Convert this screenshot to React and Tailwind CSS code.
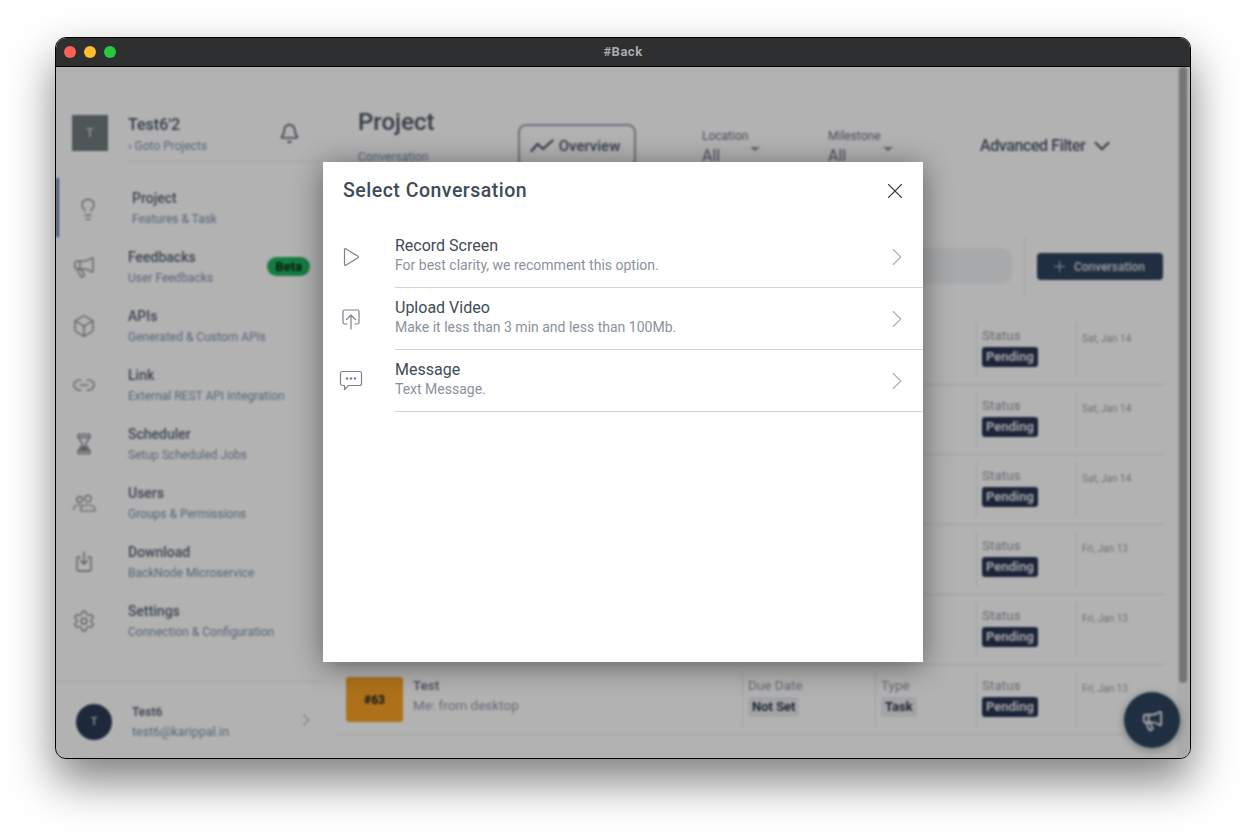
import React from "react";
import {
  Bell,
  Box,
  ChevronDown,
  ChevronRight,
  Lightbulb,
  Link2,
  Megaphone,
  Plus,
  Settings,
  X,
} from "lucide-react";

const navItems = [
  { title: "Project", sub: "Features & Task", icon: Lightbulb, active: true },
  { title: "Feedbacks", sub: "User Feedbacks", icon: Megaphone, beta: true },
  { title: "APIs", sub: "Generated & Custom APIs", icon: Box },
  { title: "Link", sub: "External REST API Integration", icon: Link2 },
  { title: "Scheduler", sub: "Setup Scheduled Jobs", icon: HourglassIcon },
  { title: "Users", sub: "Groups & Permissions", icon: UsersIcon },
  { title: "Download", sub: "BackNode Microservice", icon: DownloadIcon },
  { title: "Settings", sub: "Connection & Configuration", icon: Settings },
];

// rows 1-5 sit behind the modal up to the status column
const rows = [
  { id: "#68", date: "Sat, Jan 14", covered: true },
  { id: "#67", date: "Sat, Jan 14", covered: true },
  { id: "#66", date: "Sat, Jan 14", covered: true },
  { id: "#65", date: "Fri, Jan 13", covered: true },
  { id: "#64", date: "Fri, Jan 13", covered: true },
  { id: "#63", date: "Fri, Jan 13" },
];

const options = [
  { title: "Record Screen", sub: "For best clarity, we recomment this option.", icon: PlayIcon },
  { title: "Upload Video", sub: "Make it less than 3 min and less than 100Mb.", icon: UploadIcon },
  { title: "Message", sub: "Text Message.", icon: MessageIcon },
];

function DownloadIcon({ className }) {
  return (
    <svg viewBox="0 0 24 24" fill="none" stroke="currentColor" strokeWidth="1.3" strokeLinecap="round" strokeLinejoin="round" className={className}>
      <path d="M8 7H6.500A1.500 1.500 0 0 0 5 8.500v11A1.500 1.500 0 0 0 6.500 21h11a1.500 1.500 0 0 0 1.500-1.500v-11A1.500 1.500 0 0 0 17.500 7H16" />
      <path d="M12 2v12M8.500 10.500 12 14l3.500-3.500" />
    </svg>
  );
}

function HourglassIcon({ className }) {
  return (
    <svg viewBox="0 0 24 24" fill="none" stroke="currentColor" strokeWidth="1.3" strokeLinejoin="round" className={className}>
      <path d="M6 2.500h12v3H6zM6 18.500h12v3H6z" />
      <path d="M7 5.500c0 3.500 3.500 4.500 3.500 6.500S7 15 7 18.500M17 5.500c0 3.500-3.500 4.500-3.500 6.500s3.500 3 3.500 6.500" />
      <path d="M8 18.500 12 14l4 4.500Z" fill="currentColor" />
    </svg>
  );
}

function UsersIcon({ className }) {
  return (
    <svg viewBox="0 0 24 24" fill="none" stroke="currentColor" strokeWidth="1.2" strokeLinecap="round" strokeLinejoin="round" className={className}>
      <circle cx="7.500" cy="8.500" r="2.800" />
      <circle cx="16" cy="7.500" r="3.200" />
      <path d="M1.500 18.500c0-2.800 2.500-4.500 5.500-4.500 1.200 0 2.200.2 3 .7" />
      <path d="M8.500 19c0-3 3.300-5 7.500-5s7 2 7 5c0 .6-.4 1-1 1H9.500c-.6 0-1-.4-1-1Z" />
    </svg>
  );
}

function PlayIcon() {
  return (
    <svg width="18" height="20" viewBox="0 0 18 20" fill="none" stroke="#7b838e" strokeWidth="1.200" strokeLinejoin="round">
      <path d="M2.500 2.500v15a.8.8 0 0 0 1.200.7l12.300-7.500a.8.8 0 0 0 0-1.400L3.700 1.800a.8.8 0 0 0-1.200.7Z" />
    </svg>
  );
}

function UploadIcon() {
  return (
    <svg width="20" height="22" viewBox="0 0 20 22" fill="none" stroke="#7b838e" strokeWidth="1.200" strokeLinecap="round" strokeLinejoin="round">
      <path d="M6 16H3.500A1.500 1.500 0 0 1 2 14.500v-11A1.500 1.500 0 0 1 3.500 2h13A1.500 1.500 0 0 1 18 3.500v11a1.500 1.500 0 0 1-1.500 1.500H14" />
      <path d="M10 21V7M5.500 11.500 10 7l4.500 4.500" />
    </svg>
  );
}

function MessageIcon() {
  return (
    <svg width="24" height="22" viewBox="0 0 24 22" fill="none" stroke="#7b838e" strokeWidth="1.200" strokeLinejoin="round">
      <path d="M3.500 1.500h17a2 2 0 0 1 2 2v10a2 2 0 0 1-2 2H9.500L5.500 19.500v-4h-2a2 2 0 0 1-2-2v-10a2 2 0 0 1 2-2Z" />
      <circle cx="8" cy="8.500" r="1.300" fill="#7b838e" stroke="none" />
      <circle cx="12" cy="8.500" r="1.300" fill="#7b838e" stroke="none" />
      <circle cx="16" cy="8.500" r="1.300" fill="#7b838e" stroke="none" />
    </svg>
  );
}

function Caret() {
  return <span className="w-0 h-0 border-x-[5px] border-x-transparent border-t-[4px] border-t-[#8b929c]" />;
}

function Sidebar() {
  return (
    <aside className="w-[265px] shrink-0 flex flex-col">
      <div className="flex items-start pt-[48px] pl-[16px] h-[95px]">
        <div className="w-[36px] h-[36px] bg-[#727b7d] text-[#d5d9da] text-[12px] font-medium flex items-center justify-center">T</div>
        <div className="ml-[20px] flex-1 h-[47px] border-b border-[#e5e7eb]">
          <div className="flex justify-between">
            <div>
              <div className="text-[16px] leading-[20px] font-medium text-[#4b5563]">Test6'2</div>
              <div className="text-[12px] leading-[14px] mt-[4px] text-[#8090aa]">› Goto Projects</div>
            </div>
            <Bell size={21} strokeWidth={1.6} className="text-[#374151] mt-[8px] mr-[21px]" />
          </div>
        </div>
      </div>
      <nav className="mt-[16px] flex flex-col">
        {navItems.map((item) => (
          <div key={item.title} className={`h-[59px] flex items-center relative ${item.active ? "border-l-[3px] border-[#5f7fa8] pl-[17px]" : "pl-[16px]"}`}>
            <item.icon className={`w-[24px] h-[24px] text-[#7b8088] ${item.active ? "mt-[2px]" : ""}`} strokeWidth={1.25} />
            <div className="ml-[32px]">
              <div className="text-[14px] leading-[18px] font-medium text-[#5b6470]">{item.title}</div>
              <div className="text-[12px] leading-[14px] mt-[5px] text-[#8090aa]">{item.sub}</div>
            </div>
            {item.beta && (
              <span className="ml-auto mr-[11px] px-[8px] h-[19px] rounded-full bg-[#1fb45f] text-[13px] leading-[19px] font-semibold text-[#07180e]">Beta</span>
            )}
          </div>
        ))}
      </nav>
      <div className="mt-auto h-[77px] border-t border-[#e5e7eb] flex items-center pl-[20px] pr-[5px] pt-[4px]">
        <div className="w-[36px] h-[36px] rounded-full bg-[#2a3a55] text-[#d5dce6] text-[11px] font-medium flex items-center justify-center">T</div>
        <div className="ml-[20px] flex-1">
          <div className="text-[12px] leading-[16px] font-semibold text-[#5b6470]">Test6</div>
          <div className="text-[12.500px] leading-[16px] mt-[4px] text-[#8090aa]">test6@karippal.in</div>
        </div>
        <ChevronRight size={20} strokeWidth={1.25} className="text-[#9ca3af] -mt-[4px]" />
      </div>
    </aside>
  );
}

function Cell({ label, value, chip, width, covered }) {
  return (
    <div className={`${width} h-[55px] border-l border-[#e5e7eb] pl-[5px] pt-[5px]`}>
      {!covered && (
        <>
          <div className="text-[13.500px] leading-[16px] text-[#939aa6]">{label}</div>
          <div className={`inline-block mt-[4px] px-[4px] h-[20px] rounded-[3px] text-[13px] leading-[20px] font-semibold ${chip}`}>{value}</div>
        </>
      )}
    </div>
  );
}

function Row({ id, date, covered }) {
  return (
    <div className="h-[70px] border-b border-[#e5e7eb] flex items-center pl-[10px]">
      <div className="w-[57px] h-[45px] rounded-[3px] bg-[#f9a326] flex items-center justify-center text-[12px] font-bold text-[#111827]">{covered ? "" : id}</div>
      <div className="ml-[10px] flex-1 self-start mt-[11px]">
        {!covered && (
          <>
            <div className="text-[13.500px] leading-[18px] font-medium text-[#6b7280]">Test</div>
            <div className="text-[13.500px] leading-[18px] mt-[2px] text-[#939aa6]">Me: from desktop</div>
          </>
        )}
      </div>
      <Cell label="Due Date" value="Not Set" width="w-[133px]" chip="bg-[#e9ebee] text-[#1f2937]" covered={covered} />
      <Cell label="Type" value="Task" width="w-[101px]" chip="bg-[#e9ebee] text-[#1f2937]" covered={covered} />
      <Cell label="Status" value="Pending" width="w-[100px]" chip="bg-[#2a3352] text-[#f3f4f6]" />
      <div className="w-[89px] h-[55px] border-l border-[#e5e7eb] pl-[5px] pt-[10px] text-[10px] leading-[14px] text-[#9ca3af]">{date}</div>
    </div>
  );
}

function Main() {
  return (
    <main className="flex-1 min-w-0 pl-[15px] pr-[12px]">
      <div className="h-[170px] flex items-start pl-[22px] pt-[41px]">
        <div className="w-[160px]">
          <div className="text-[24px] leading-[28px] font-medium text-[#4b5563]">Project</div>
          <div className="text-[12px] leading-[14px] mt-[14px] text-[#8090aa]">Conversation</div>
        </div>
        <div className="mt-[16px] w-[118px] h-[44px] pr-[4px] rounded-[8px] border-2 border-[#9ca3af] flex items-center justify-center gap-[5px] text-[15px] font-medium text-[#4b5563]">
          <svg width="24" height="14" viewBox="0 0 24 14" fill="none" stroke="currentColor" strokeWidth="2.200" strokeLinecap="round" strokeLinejoin="round">
            <path d="m1.500 12 6-7 5.500 5 9.500-8.500" />
          </svg>
          Overview
        </div>
        <div className="ml-[66px] w-[126px] mt-[21px]">
          <div className="text-[12px] leading-[14px] text-[#6b7280]">Location</div>
          <div className="flex items-start">
            <span className="text-[16px] leading-[20px] mt-[3px] text-[#6b7280]">All</span>
            <span className="ml-[30px] mt-[4px] flex"><Caret /></span>
          </div>
        </div>
        <div className="w-[152px] mt-[21px]">
          <div className="text-[12px] leading-[14px] text-[#6b7280]">Milestone</div>
          <div className="flex items-start">
            <span className="text-[16px] leading-[20px] mt-[3px] text-[#6b7280]">All</span>
            <span className="ml-[37px] mt-[4px] flex"><Caret /></span>
          </div>
        </div>
        <div className="mt-[25px] flex items-center text-[16px] leading-[20px] font-medium tracking-[-0.4px] text-[#4b5563]">
          Advanced Filter
          <ChevronDown size={26} strokeWidth={1.9} className="ml-[4px]" />
        </div>
      </div>
      <div className="h-[58px] flex items-center mb-[20px] pr-[2px]">
        <div className="flex-1 h-[36px] rounded-[10px] bg-[#f1f3f5]" />
        <div className="w-px h-[58px] bg-[#e5e7eb] mx-[12px]" />
        <div className="w-[126px] h-[27px] rounded-[4px] bg-[#2d435c] flex items-center justify-center gap-[6px] text-[12px] font-medium pt-[1px] pr-[4px] text-[#dde2e8]">
          <Plus size={17} strokeWidth={1.25} />
          Conversation
        </div>
      </div>
      {rows.map((row) => (
        <Row key={row.id} id={row.id} date={row.date} covered={row.covered} />
      ))}
    </main>
  );
}

function Modal() {
  return (
    <div className="absolute inset-0 bg-black/30 flex items-center justify-center pb-[1px]">
      <div className="w-[600px] h-[500px] bg-white shadow-[0_4px_28px_rgba(0,0,0,0.45)]">
        <div className="h-[64px] flex items-center justify-between pl-[20px] pr-[15px] pb-[7px]">
          <h2 className="text-[19.500px] font-medium tracking-[0.5px] text-[#414b57]">Select Conversation</h2>
          <X size={26} strokeWidth={1} className="text-[#374151]" />
        </div>
        {options.map((option) => (
          <div key={option.title} className="h-[62px] flex">
            <div className="w-[72px] pr-[16px] shrink-0 flex items-center justify-center">
              <option.icon />
            </div>
            <div className="flex-1 border-b border-[#d1d5db] flex items-center justify-between pr-[11px] pb-[3px]">
              <div>
                <div className="text-[16px] leading-[20px] text-[#414b57]">{option.title}</div>
                <div className="text-[14px] leading-[18px] text-[#8a929c]">{option.sub}</div>
              </div>
              <ChevronRight size={30} strokeWidth={0.9} className="text-[#a9afb7] mt-[3px]" />
            </div>
          </div>
        ))}
      </div>
    </div>
  );
}

export default function App() {
  return (
    <div className="w-[1246px] h-[832px] bg-white pt-[37px] pl-[55px] overflow-hidden font-['Roboto',sans-serif]">
      <div className="w-[1136px] h-[722px] rounded-[11px] border border-black overflow-hidden flex flex-col bg-white shadow-[0_22px_45px_rgba(0,0,0,0.5)]">
        <div className="h-[29px] shrink-0 bg-[#2e2f31] border-b border-black relative flex items-center justify-center">
          <div className="absolute left-[8px] top-[8px] flex gap-[8px]">
            <span className="w-[12px] h-[12px] rounded-full bg-[#ff5f57]" />
            <span className="w-[12px] h-[12px] rounded-full bg-[#febc2e]" />
            <span className="w-[12px] h-[12px] rounded-full bg-[#28c840]" />
          </div>
          <span className="text-[13px] font-bold tracking-[0.5px] text-[#a9abad]">#Back</span>
        </div>
        <div className="relative flex-1 min-h-0 overflow-hidden">
          <div className="h-full flex blur-[1.1px]">
            <Sidebar />
            <Main />
            <div className="w-[13px] shrink-0 bg-[#f5f5f5] px-[2px]">
              <div className="h-[616px] w-[8px] rounded-full bg-[#a8a8a8]" />
            </div>
            <div className="absolute left-[1068px] top-[625px] w-[56px] h-[56px] rounded-full bg-[#2d435c] text-[#f3f4f6] flex items-center justify-center shadow-[0_2px_8px_rgba(0,0,0,0.35)]">
              <Megaphone size={23} strokeWidth={2} />
            </div>
          </div>
          <Modal />
        </div>
      </div>
    </div>
  );
}
